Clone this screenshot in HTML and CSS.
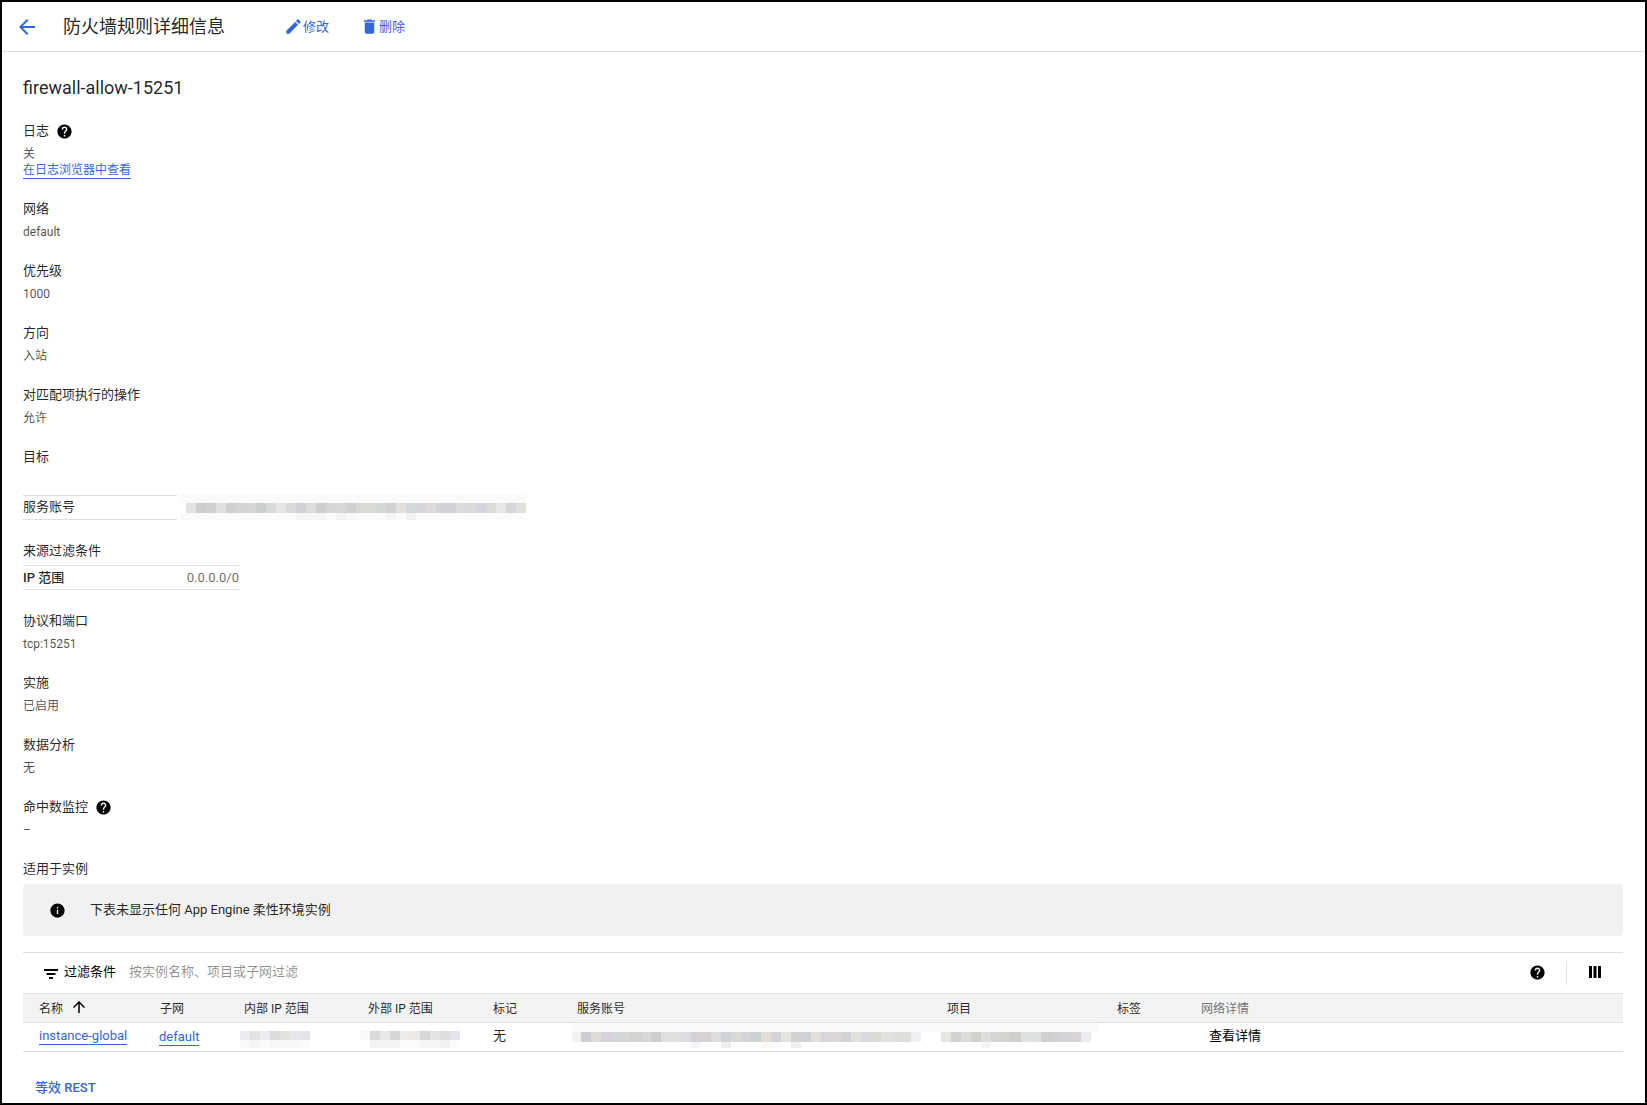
FILE: index.html
```html
<!DOCTYPE html>
<html lang="zh-CN">
<head>
<meta charset="utf-8">
<title>防火墙规则详细信息</title>
<link rel="stylesheet" href="styles.css">
</head>
<body>
<div class="page">
  <header class="topbar">
    <a class="back" href="#"><svg class="icon-back" viewBox="0 0 24 24"><path d="M20 11H7.83l5.59-5.59L12 4l-8 8 8 8 1.41-1.41L7.83 13H20v-2z"/></svg></a>
    <h1 class="page-title">防火墙规则详细信息</h1>
    <a class="action action-edit" href="#"><svg class="icon-action" viewBox="0 0 24 24"><path d="M3 17.25V21h3.75L17.81 9.94l-3.75-3.75L3 17.25zM20.71 7.04c.39-.39.39-1.02 0-1.41l-2.34-2.34c-.39-.39-1.02-.39-1.41 0l-1.83 1.83 3.75 3.75 1.83-1.83z"/></svg>修改</a>
    <a class="action action-delete" href="#"><svg class="icon-action" viewBox="0 0 24 24"><path d="M6 19c0 1.1.9 2 2 2h8c1.1 0 2-.9 2-2V7H6v12zM19 4h-3.5l-1-1h-5l-1 1H5v2h14V4z"/></svg>删除</a>
  </header>
  <main class="content">
    <h2 class="rule-name">firewall-allow-15251</h2>

    <section class="field field-log">
      <div class="label">日志<svg class="icon-help" viewBox="0 0 24 24"><path d="M12 2C6.48 2 2 6.48 2 12s4.48 10 10 10 10-4.48 10-10S17.52 2 12 2zm1 17h-2v-2h2v2zm2.07-7.75l-.9.92C13.45 12.9 13 13.5 13 15h-2v-.5c0-1.1.45-2.1 1.17-2.83l1.24-1.26c.37-.36.59-.86.59-1.41 0-1.1-.9-2-2-2s-2 .9-2 2H8c0-2.21 1.79-4 4-4s4 1.79 4 4c0 .88-.36 1.68-.93 2.25z"/></svg></div>
      <div class="value">关</div>
      <div class="value"><a class="link" href="#">在日志浏览器中查看</a></div>
    </section>
    <section class="field"><div class="label">网络</div><div class="value">default</div></section>
    <section class="field"><div class="label">优先级</div><div class="value">1000</div></section>
    <section class="field"><div class="label">方向</div><div class="value">入站</div></section>
    <section class="field"><div class="label">对匹配项执行的操作</div><div class="value">允许</div></section>

    <div class="label target-label">目标</div>
    <div class="kv-row">
      <div class="kv-key">服务账号</div>
      <div class="mosaic mosaic-sa" aria-hidden="true"></div>
    </div>

    <div class="label source-label">来源过滤条件</div>
    <div class="source-row">
      <span class="source-key">IP 范围</span>
      <span class="source-val">0.0.0.0/0</span>
    </div>

    <section class="field"><div class="label">协议和端口</div><div class="value">tcp:15251</div></section>
    <section class="field"><div class="label">实施</div><div class="value">已启用</div></section>
    <section class="field"><div class="label">数据分析</div><div class="value">无</div></section>
    <section class="field"><div class="label">命中数监控<svg class="icon-help" viewBox="0 0 24 24"><path d="M12 2C6.48 2 2 6.48 2 12s4.48 10 10 10 10-4.48 10-10S17.52 2 12 2zm1 17h-2v-2h2v2zm2.07-7.75l-.9.92C13.45 12.9 13 13.5 13 15h-2v-.5c0-1.1.45-2.1 1.17-2.83l1.24-1.26c.37-.36.59-.86.59-1.41 0-1.1-.9-2-2-2s-2 .9-2 2H8c0-2.21 1.79-4 4-4s4 1.79 4 4c0 .88-.36 1.68-.93 2.25z"/></svg></div><div class="value">–</div></section>

    <div class="label">适用于实例</div>
    <div class="banner">
      <svg class="icon-info" viewBox="0 0 24 24"><path d="M12 2C6.48 2 2 6.48 2 12s4.48 10 10 10 10-4.48 10-10S17.52 2 12 2zm1 15h-2v-6h2v6zm0-8h-2V7h2v2z"/></svg>
      <span class="banner-text">下表未显示任何 App Engine 柔性环境实例</span>
    </div>

    <div class="filterbar">
      <svg class="icon-filter" viewBox="0 0 14 10"><path d="M0 0h14v2H0zM2.5 4h9v2h-9zM5 8h4v2H5z"/></svg>
      <span class="filter-label">过滤条件</span>
      <span class="filter-hint">按实例名称、项目或子网过滤</span>
      <svg class="icon-tool" viewBox="0 0 24 24"><path d="M12 2C6.48 2 2 6.48 2 12s4.48 10 10 10 10-4.48 10-10S17.52 2 12 2zm1 17h-2v-2h2v2zm2.07-7.75l-.9.92C13.45 12.9 13 13.5 13 15h-2v-.5c0-1.1.45-2.1 1.17-2.83l1.24-1.26c.37-.36.59-.86.59-1.41 0-1.1-.9-2-2-2s-2 .9-2 2H8c0-2.21 1.79-4 4-4s4 1.79 4 4c0 .88-.36 1.68-.93 2.25z"/></svg>
      <span class="tool-divider"></span>
      <svg class="icon-columns" viewBox="0 0 12 12"><path d="M0 0h3v12H0zM4.5 0h3v12h-3zM9 0h3v12H9z"/></svg>
    </div>

    <div class="grid-row grid-head">
      <div class="cell-first">名称<svg class="icon-sort" viewBox="0 0 24 24"><path d="M4 12l1.41 1.41L11 7.83V20h2V7.83l5.58 5.59L20 12l-8-8-8 8z"/></svg></div>
      <div>子网</div>
      <div>内部 IP 范围</div>
      <div>外部 IP 范围</div>
      <div>标记</div>
      <div>服务账号</div>
      <div>项目</div>
      <div>标签</div>
      <div class="head-muted">网络详情</div>
    </div>
    <div class="grid-row grid-body">
      <div class="cell-first"><a class="link" href="#">instance-global</a></div>
      <div class="cell-net"><a class="link" href="#">default</a></div>
      <div></div>
      <div></div>
      <div class="cell-text">无</div>
      <div></div>
      <div></div>
      <div></div>
      <div class="cell-text cell-details">查看详情</div>
      <div class="mosaic mosaic-int" aria-hidden="true"></div>
      <div class="mosaic mosaic-ext" aria-hidden="true"></div>
      <div class="mosaic mosaic-acct" aria-hidden="true"></div>
    </div>

    <a class="rest" href="#">等效 REST</a>
  </main>
</div>
</body>
</html>
```
FILE: styles.css
```css
* { box-sizing: border-box; }
html, body { margin: 0; padding: 0; }
body {
  font-family: Roboto, "Noto Sans CJK SC", sans-serif;
  color: rgba(0, 0, 0, .87);
  background: #fff;
}
a { text-decoration: none; color: #3367d6; }
svg { display: block; fill: currentColor; flex: none; }

.page {
  width: 1647px;
  height: 1105px;
  border: 2px solid #000;
  overflow: hidden;
  background: #fff;
}

/* top bar */
.topbar {
  display: flex;
  align-items: center;
  height: 50px;
  border-bottom: 1px solid #e0e0e0;
}
.back { margin-left: 13px; color: #3367d6; }
.icon-back { width: 24px; height: 24px; }
.page-title {
  margin: 0 0 0 24px;
  width: 162px;
  font-size: 18px;
  font-weight: 400;
  line-height: 28px;
  white-space: nowrap;
}
.action {
  display: flex;
  align-items: center;
  font-size: 13px;
  line-height: 18px;
}
.action-edit { margin-left: 59px; }
.action-delete { margin-left: 31px; }
.icon-action { width: 19px; height: 19px; }

/* main column */
.content { padding: 24px 22px 0 21px; }
.rule-name {
  margin: 0 0 21px;
  font-size: 18px;
  font-weight: 400;
  line-height: 24px;
}
.field { margin-bottom: 22px; }
.field-log { margin-bottom: 21px; }
.label {
  display: flex;
  align-items: center;
  height: 20px;
  padding-bottom: 2px;
  font-size: 13px;
  line-height: 18px;
}
.field-log .label { padding-bottom: 0; }
.value {
  font-size: 12px;
  line-height: 16px;
  color: rgba(0, 0, 0, .7);
}
.label + .value { margin-top: 4px; }
.field-log .label + .value { margin-top: 5px; }
.link {
  display: inline-block;
  height: 16px;
  line-height: 15px;
  border-bottom: 1px solid #3367d6;
  color: #3367d6;
}
.icon-help { width: 17px; height: 17px; margin-left: 6.5px; color: #000; }

/* key / value tables */
.target-label { margin-bottom: 27px; }
.kv-row { display: flex; height: 24px; }
.kv-key {
  width: 154px;
  height: 25px;
  border-top: 1px solid #e0e0e0;
  border-bottom: 1px solid #e0e0e0;
  font-size: 13px;
  line-height: 21px;
}
.label.source-label { margin-top: 22px; margin-bottom: 4px; padding-bottom: 0; }
.source-row {
  display: flex;
  justify-content: space-between;
  align-items: center;
  width: 216px;
  height: 25px;
  padding-bottom: 2px;
  margin-bottom: 22px;
  border-top: 1px solid #e0e0e0;
  border-bottom: 1px solid #e0e0e0;
}
.source-key { font-size: 13px; font-weight: 500; }
.source-val { padding-top: 1px; font-size: 13px; color: rgba(0, 0, 0, .6); }

/* banner */
.banner {
  display: flex;
  align-items: center;
  height: 52px;
  margin-top: 4px;
  padding-left: 26px;
  background: #f1f1f1;
  border-radius: 4px;
  font-size: 13px;
}
.icon-info { width: 17px; height: 17px; margin-right: 24px; color: #000; }
.banner-text { padding-bottom: 4px; }

/* filter bar */
.filterbar {
  display: flex;
  align-items: center;
  height: 41px;
  margin-top: 16px;
  border-top: 1px solid #e0e0e0;
  padding-left: 21px;
}
.icon-filter { width: 14px; height: 10px; margin-top: 1px; margin-right: 6px; color: #000; }
.filter-label { padding-bottom: 6px; font-size: 13px; color: #000; }
.filter-hint { flex: 1; padding-bottom: 6px; margin-left: 13px; font-size: 13px; color: rgba(0, 0, 0, .45); }
.icon-tool { width: 17px; height: 17px; margin-bottom: 2px; color: #000; }
.tool-divider { width: 1px; height: 24px; margin: 0 22px 0 20px; background: #e0e0e0; }
.icon-columns { width: 12px; height: 12px; margin-bottom: 2px; margin-right: 22px; color: #000; }

/* instances table */
.grid-row {
  display: grid;
  grid-template-columns: 137px 84px 124px 125px 84px 370px 170px 84px 1fr;
  align-items: center;
}
.grid-head {
  height: 30px;
  padding-bottom: 2px;
  border-top: 1px solid #e0e0e0;
  border-bottom: 1px solid #e0e0e0;
  background: #f3f3f3;
  font-size: 12px;
}
.grid-body {
  position: relative;
  height: 29px;
  border-bottom: 1px solid #e0e0e0;
  font-size: 13px;
}
.grid-body .link { line-height: 13px; }
.cell-first { display: flex; align-items: center; padding-left: 16px; }
.cell-net { margin-left: -1px; }
.cell-text { padding-bottom: 5px; }
.icon-sort { width: 18px; height: 18px; margin-left: 7px; color: #000; }
.head-muted { color: #757575; }
.cell-details { padding-left: 8px; color: #000; }

/* redacted values */
.mosaic { pointer-events: none; background-repeat: no-repeat; }
.mosaic-sa {
  width: 346px;
  height: 26px;
  margin-top: -1px;
  margin-left: 3px;
  background-image:
    linear-gradient(#fafafa, #fafafa),
    linear-gradient(90deg, #fff 0 6px, #e2e2e1 0 16px, #cccccf 0 26px, #ced0d2 0 36px, #e2dfe0 0 46px, #cfcfcf 0 56px, #d3d4d6 0 66px, #d6d5d3 0 76px, #c9cecf 0 86px, #d9dada 0 96px, #e6e5e3 0 106px, #d8d9d8 0 116px, #d0d1d6 0 126px, #dcdddd 0 136px, #cececd 0 146px, #d6d6d7 0 156px, #d7d7d7 0 166px, #cfcfce 0 176px, #d9d9d7 0 186px, #dadbd6 0 196px, #d2d6d6 0 206px, #d1d1d3 0 216px, #e4e1dc 0 226px, #d4d8da 0 236px, #d5d5db 0 246px, #ded9da 0 256px, #d3d3d5 0 266px, #d1d1d6 0 276px, #dcdcda 0 286px, #dadadb 0 296px, #d6d3da 0 306px, #dadcd8 0 316px, #e6e8e8 0 326px, #d6d6d8 0 336px, #e0e1db 0 346px),
    linear-gradient(90deg, #fbfbfb 0 116px, #f3f6f5 0 146px, #fbfbfb 0 156px, #f3f3f3 0 166px, #f8f8f8 0 176px, #fbfbfb 0 206px, #f3f6f5 0 216px, #fbfbfb 0 226px, #f2f2f2 0 236px, #fbfbfb 0 346px);
  background-size: 100% 9px, 100% 10px, 100% 7px;
  background-position: 0 0, 0 9px, 0 19px;
}
.mosaic-int, .mosaic-ext, .mosaic-acct { position: absolute; }
.mosaic-int {
  left: 217px;
  top: 8px;
  width: 70px;
  height: 17px;
  background-image:
    linear-gradient(90deg, #ecebef 0 10px, #e2e2e2 0 20px, #ecebef 0 30px, #d9dcdb 0 40px, #e2e3dc 0 50px, #e8e6e9 0 60px, #e3e3ea 0 70px),
    linear-gradient(90deg, #fafafa 0 10px, #f5f5f5 0 20px, #fbfbfb 0 30px, #f8f8f6 0 40px, #f8f8f8 0 50px, #f9f9f9 0 60px, #fcfcfc 0 70px);
  background-size: 100% 9px, 100% 8px;
  background-position: 0 0, 0 9px;
}
.mosaic-ext {
  left: 337px;
  top: 8px;
  width: 100px;
  height: 17px;
  background-image:
    linear-gradient(90deg, #faf9f7 0 10px, #d9d9d9 0 20px, #e8e8e8 0 30px, #d6d6d8 0 40px, #ebebe9 0 50px, #ebe8e6 0 60px, #d6d6d6 0 70px, #e3e5e4 0 80px, #dddcde 0 90px, #e4e4ec 0 100px),
    linear-gradient(90deg, #fff 0 10px, #f3f3f3 0 20px, #f4f4f4 0 40px, #fbfbfb 0 60px, #f6f6f6 0 80px, #f1f1f1 0 90px, #fbfbfb 0 100px);
  background-size: 100% 9px, 100% 8px;
  background-position: 0 0, 0 9px;
}
.mosaic-acct {
  left: 549px;
  top: 0;
  width: 527px;
  height: 25px;
  background-image:
    linear-gradient(#fafafa, #fafafa),
    linear-gradient(90deg, #f3f2ef 0 9px, #cfced2 0 19px, #dfdcd6 0 29px, #d8d2d8 0 39px, #d5d6dc 0 49px, #d8d8d2 0 59px, #d3d3d5 0 69px, #d7d7d9 0 79px, #d0cdcf 0 89px, #e0e0e0 0 99px, #e0e0dc 0 109px, #dcdce2 0 119px, #d4d2d4 0 129px, #d7d2d2 0 139px, #dcdedc 0 149px, #cfd4d8 0 159px, #d8dad4 0 169px, #d4d4d7 0 179px, #cbd2d3 0 189px, #e2ded7 0 199px, #d2d3d7 0 209px, #e4e4e1 0 219px, #d2d2d5 0 229px, #cfd2d5 0 239px, #e2e0db 0 249px, #dbd5db 0 259px, #dad6da 0 269px, #d4d4d6 0 279px, #e1e0dc 0 289px, #d8d8de 0 299px, #dadcd4 0 309px, #e0e2e2 0 319px, #dededc 0 329px, #dcdeda 0 339px, #eef0f3 0 349px, #fff 0 369px, #e6e7e1 0 379px, #d2d2d0 0 389px, #dedcdc 0 399px, #d2d2ce 0 409px, #dcdfdb 0 419px, #d4d6d4 0 429px, #d2d4d0 0 439px, #ced0cc 0 449px, #dfe2e0 0 459px, #dce1e2 0 469px, #d0cfd0 0 479px, #d3d1d3 0 489px, #d3d4d7 0 499px, #d8d4d4 0 509px, #eaecf0 0 519px, #fff 0 527px),
    linear-gradient(90deg, #fff 0 119px, #f5f6f9 0 129px, #fff 0 149px, #eeeeee 0 159px, #fff 0 189px, #faf8f3 0 199px, #f9fbfd 0 209px, #fff 0 219px, #edf0ef 0 229px, #fff 0 409px, #f5f5f3 0 419px, #fff 0 527px);
  background-size: 100% 9px, 100% 10px, 100% 6px;
  background-position: 0 0, 0 9px, 0 19px;
}

.rest {
  display: block;
  margin-top: 27px;
  margin-left: 12px;
  font-size: 13px;
  font-weight: 500;
  line-height: 18px;
}
```
